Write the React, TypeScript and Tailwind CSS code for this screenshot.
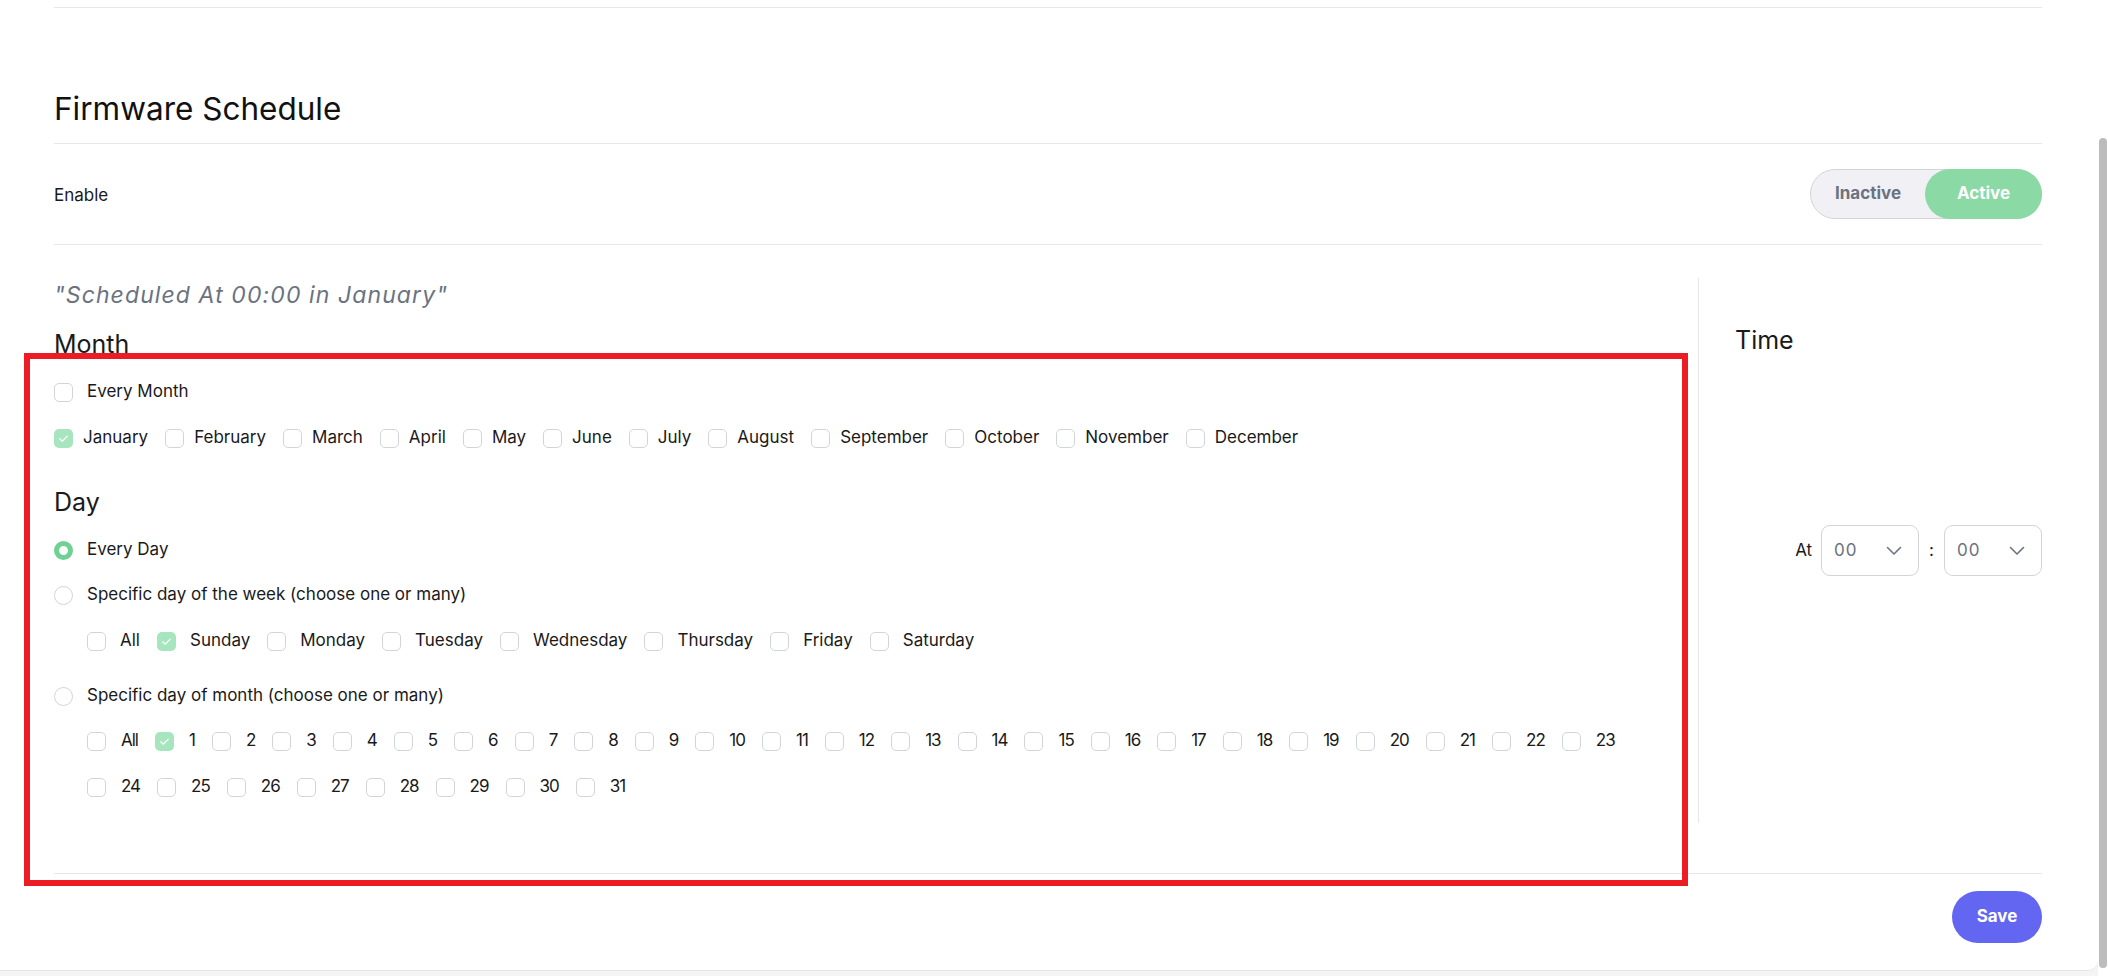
import React from 'react';

const months = ['January', 'February', 'March', 'April', 'May', 'June', 'July', 'August', 'September', 'October', 'November', 'December'];
const weekDays = ['All', 'Sunday', 'Monday', 'Tuesday', 'Wednesday', 'Thursday', 'Friday', 'Saturday'];
const dayRowOne = ['All', ...Array.from({ length: 23 }, (_, i) => String(i + 1))];
const dayRowTwo = Array.from({ length: 8 }, (_, i) => String(i + 24));

const Checkbox = ({ checked }: { checked?: boolean }) =>
  checked ? (
    <span className="flex h-[19px] w-[19px] shrink-0 items-center justify-center rounded-[5px] bg-[#a7e5be]">
      <svg width="13" height="13" viewBox="0 0 24 24" fill="none" stroke="white" strokeWidth="2.2" strokeLinecap="round" strokeLinejoin="round">
        <path d="M5 12.5l4.5 4.5L19 7.5" />
      </svg>
    </span>
  ) : (
    <span className="h-[19px] w-[19px] shrink-0 rounded-[5px] border-[1.5px] border-[#d1d5db] bg-white" />
  );

const Radio = ({ checked }: { checked?: boolean }) =>
  checked ? (
    <span className="h-[19px] w-[19px] shrink-0 rounded-full border-[5px] border-[#6fd192] bg-white" />
  ) : (
    <span className="h-[19px] w-[19px] shrink-0 rounded-full border-[1.5px] border-[#d1d5db] bg-white" />
  );

const Option = ({ label, checked, labelClass }: { label: string; checked?: boolean; labelClass: string }) => (
  <label className="flex h-[24px] items-center">
    <Checkbox checked={checked} />
    <span className={labelClass}>{label}</span>
  </label>
);

const RadioRow = ({ label, checked }: { label: string; checked?: boolean }) => (
  <label className="flex h-[24px] items-center">
    <Radio checked={checked} />
    <span className="ml-[14px]">{label}</span>
  </label>
);

const TimeSelect = () => (
  <div className="flex h-[51px] w-[98px] items-center justify-between rounded-[9px] border border-[#d1d5db] bg-white pl-[12px] pr-[16px]">
    <span className="text-[17px] tracking-[1px] text-[#6b7280]">00</span>
    <svg width="16" height="10" viewBox="0 0 16 10" fill="none" stroke="#6b7280" strokeWidth="1.6" strokeLinecap="round" strokeLinejoin="round">
      <path d="M1.5 1.5l6.5 6.5 6.5-6.5" />
    </svg>
  </div>
);

export default function App() {
  return (
    <div className="flex h-[976px] w-full overflow-hidden bg-[#f4f4f5] font-['Inter',sans-serif] text-[17px] text-[#1a1a1a]">
      <div className="relative h-[971px] flex-1 rounded-br-[10px] border-b border-[#e4e4e7] bg-white pl-[54px] pr-[56px]">
        <div className="mt-[7px] border-t border-[#e5e7eb]" />

        {/* Header */}
        <div className="border-b border-[#e5e7eb] pb-[14px] pt-[81px]">
          <h1 className="text-[31.5px] leading-[40px] text-[#111]">Firmware Schedule</h1>
        </div>

        {/* Enable */}
        <div className="flex h-[101px] items-center justify-between border-b border-[#e5e7eb]">
          <span className="mt-[4px]">Enable</span>
          <div className="flex h-[50px] w-[232px] rounded-full border border-[#d4d4d8] bg-[#f1f1f5]">
            <div className="flex flex-1 items-center justify-center font-bold text-[#6b7280]">Inactive</div>
            <div className="-my-px -mr-px flex w-[117px] items-center justify-center rounded-full bg-[#8bd9a5] font-bold text-white">Active</div>
          </div>
        </div>

        {/* Body */}
        <div className="mt-[33px] flex h-[545px]">
          <div className="flex-1">
            <p className="mt-[1px] text-[23px] italic leading-[32px] tracking-[1.1px] text-[#6b7280]">"Scheduled At 00:00 in January"</p>

            <h2 className="mt-[17px] text-[25px] leading-[32px]">Month</h2>
            <div className="mt-[20px]">
              <Option label="Every Month" labelClass="ml-[14px]" />
            </div>
            <div className="mt-[22px] flex items-center gap-x-[17px]">
              {months.map((m, i) => (
                <Option key={m} label={m} checked={i === 0} labelClass="ml-[10px]" />
              ))}
            </div>

            <h2 className="mt-[36px] text-[25px] leading-[32px]">Day</h2>
            <div className="mt-[20px]">
              <RadioRow label="Every Day" checked />
            </div>
            <div className="mt-[21px]">
              <RadioRow label="Specific day of the week (choose one or many)" />
            </div>
            <div className="mt-[22px] flex items-center gap-x-[17px] pl-[33px]">
              {weekDays.map((d) => (
                <Option key={d} label={d} checked={d === 'Sunday'} labelClass="ml-[14px]" />
              ))}
            </div>
            <div className="mt-[31px]">
              <RadioRow label="Specific day of month (choose one or many)" />
            </div>
            <div className="mt-[21px] flex items-center gap-x-[17px] pl-[33px]">
              {dayRowOne.map((d) => (
                <Option key={d} label={d} checked={d === '1'} labelClass="ml-[15px] tracking-[-1px]" />
              ))}
            </div>
            <div className="mt-[22px] flex items-center gap-x-[17px] pl-[33px]">
              {dayRowTwo.map((d) => (
                <Option key={d} label={d} labelClass="ml-[15px] tracking-[-1px]" />
              ))}
            </div>
          </div>

          {/* Time */}
          <div className="flex w-[344px] flex-col border-l border-[#e5e7eb] pl-[36px]">
            <h2 className="mt-[46px] text-[25px] leading-[32px]">Time</h2>
            <div className="flex flex-1 items-center justify-end pb-[78px]">
              <span className="mr-[9px]">At</span>
              <TimeSelect />
              <span className="mx-[10px]">:</span>
              <TimeSelect />
            </div>
          </div>
        </div>

        {/* Footer */}
        <div className="mt-[50px] flex justify-end border-t border-[#e5e7eb] pt-[17px]">
          <button className="h-[52px] w-[90px] rounded-full bg-[#6366f1] font-bold text-white">Save</button>
        </div>

        {/* annotation frame */}
        <div className="pointer-events-none absolute left-[24px] top-[353px] h-[533px] w-[1664px] border-[6px] border-[#ec1c24]" />
      </div>

      {/* scrollbar */}
      <div className="w-[10px] bg-white">
        <div className="ml-[1px] mt-[138px] h-[830px] w-[8px] rounded-full bg-[#bcbcbc]" />
      </div>
    </div>
  );
}
